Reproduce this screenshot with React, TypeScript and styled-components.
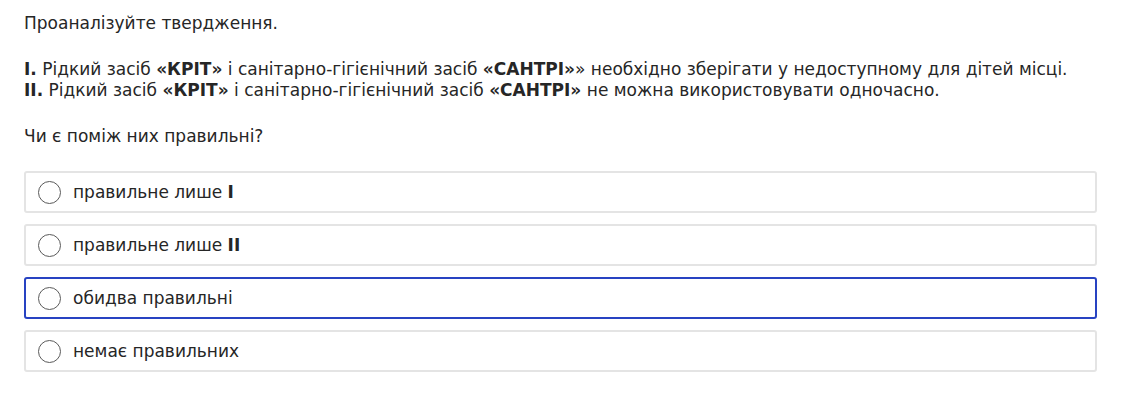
import React, {useState} from 'react';
import styled, {createGlobalStyle} from "styled-components";

const GlobalStyle = createGlobalStyle`
    body {
        margin: 0;
        background: #fff;
        font-family: "DejaVu Sans", "Liberation Sans", sans-serif;
        color: #262626;
    }
`;

type Option = {
    id: number
    text: string
    bold?: string
}

const options: Option[] = [
    {id: 1, text: 'правильне лише ', bold: 'І'},
    {id: 2, text: 'правильне лише ', bold: 'ІІ'},
    {id: 3, text: 'обидва правильні'},
    {id: 4, text: 'немає правильних'},
]

export default function App() {
    const [selected, setSelected] = useState<number | null>(null)
    const focused = 3

    return (
        <>
            <GlobalStyle/>
            <Wrapper>
                <Question>
                    <P>Проаналізуйте твердження.</P>
                    <Statements>
                        <P><b>І.</b> Рідкий засіб <b>«КРІТ»</b> і санітарно-гігієнічний засіб <b>«САНТРІ»</b>» необхідно зберігати у недоступному для дітей місці.</P>
                        <P><b>ІІ.</b> Рідкий засіб <b>«КРІТ»</b> і санітарно-гігієнічний засіб <b>«САНТРІ»</b> не можна використовувати одночасно.</P>
                    </Statements>
                    <Ask>Чи є поміж них правильні?</Ask>
                </Question>
                <Answers>
                    {options.map(o => (
                        <Answer key={o.id} $active={o.id === focused} onClick={() => setSelected(o.id)}>
                            <Radio $checked={selected === o.id}/>
                            <AnswerText>{o.text}{o.bold && <b>{o.bold}</b>}</AnswerText>
                        </Answer>
                    ))}
                </Answers>
            </Wrapper>
        </>
    );
}

const Wrapper = styled.div`
    padding: 13px 24px 24px 24px;
    width: 1073px;
`;

const Question = styled.div`
    display: flex;
    flex-direction: column;
    font-size: 17px;
    line-height: 21px;
`;

const Statements = styled.div`
    display: flex;
    flex-direction: column;
    margin-top: 25px;
`;

const P = styled.p`
    margin: 0;
    white-space: nowrap;
    b {
        font-weight: 700;
    }
`;

const Ask = styled(P)`
    margin-top: 25px;
`;

const Answers = styled.div`
    margin-top: 24px;
    display: flex;
    flex-direction: column;
    gap: 11px;
`;

const Answer = styled.label<{ $active?: boolean }>`
    height: 42px;
    box-sizing: border-box;
    display: flex;
    align-items: center;
    gap: 12px;
    padding: 0 12px;
    border: 2px solid ${p => p.$active ? '#2843c2' : '#e4e4e4'};
    border-radius: 3px;
    cursor: pointer;
`;

const Radio = styled.span<{ $checked?: boolean }>`
    width: 23px;
    height: 23px;
    box-sizing: border-box;
    border-radius: 50%;
    border: 1px solid #5a5a5a;
    flex-shrink: 0;
    background: ${p => p.$checked ? 'radial-gradient(circle, #2843c2 0 5px, #fff 6px)' : '#fff'};
`;

const AnswerText = styled.span`
    font-size: 17px;
    line-height: 21px;
    b {
        font-weight: 700;
    }
`;
